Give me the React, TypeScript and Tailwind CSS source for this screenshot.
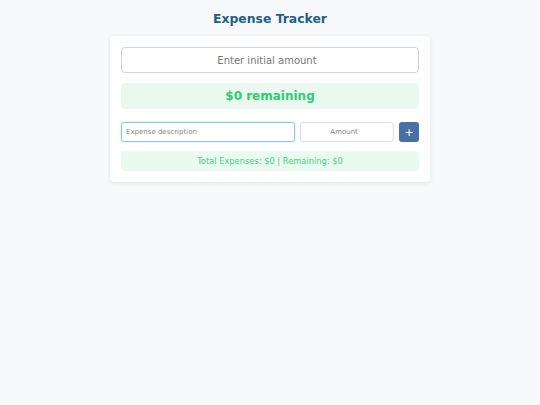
import { useState } from 'react';

export default function App() {
  const [initial, setInitial] = useState('');
  const [desc, setDesc] = useState('');
  const [amount, setAmount] = useState('');

  const total = 0;
  const remaining = (Number(initial) || 0) - total;

  return (
    <div className="min-h-screen bg-[#f8f9fa] pt-[11px] font-['DejaVu_Sans',sans-serif]">
      <h1 className="text-center text-[12.4px] font-bold text-[#1e5f8a] leading-[16px] mb-[9px]">Expense Tracker</h1>

      <div className="mx-auto w-[320px] bg-white rounded-[4px] shadow-[0_1px_4px_rgba(0,0,0,0.1)] p-[11px]">
        <input
          type="number"
          value={initial}
          onChange={(e) => setInitial(e.target.value)}
          placeholder="Enter initial amount"
          className="block w-full h-[26px] border border-[#d4d4d4] rounded-[4px] pl-[9px] text-center text-[10px] text-[#555] placeholder:text-[#777] outline-none"
        />

        <div className="mt-[10px] h-[26px] rounded-[4px] bg-[#eaf8f0] flex items-center justify-center text-[12px] font-bold text-[#2ecc71]">
          ${remaining} remaining
        </div>

        <div className="mt-[13px] flex gap-[5px] h-[20px]">
          <input
            autoFocus
            value={desc}
            onChange={(e) => setDesc(e.target.value)}
            placeholder="Expense description"
            className="w-[175px] h-full border border-[#8cc8e6] rounded-[3px] px-[4px] text-[7px] text-[#555] placeholder:text-[#888] outline-none shadow-[0_0_2px_rgba(100,180,230,0.5)]"
          />
          <input
            type="number"
            value={amount}
            onChange={(e) => setAmount(e.target.value)}
            placeholder="Amount"
            className="w-[94px] h-full border border-[#dcdcdc] rounded-[3px] pl-[9px] text-center text-[7px] text-[#555] placeholder:text-[#888] outline-none"
          />
          <button className="w-[20px] h-full rounded-[3px] bg-[#4a6fa5] text-white text-[11px] leading-none flex items-center justify-center">
            +
          </button>
        </div>

        <div className="mt-[9px] h-[20px] rounded-[4px] bg-[#eafaf1] flex items-center justify-center text-[8.3px] text-[#48cf80]">
          Total Expenses: ${total} | Remaining: ${remaining}
        </div>
      </div>
    </div>
  );
}
